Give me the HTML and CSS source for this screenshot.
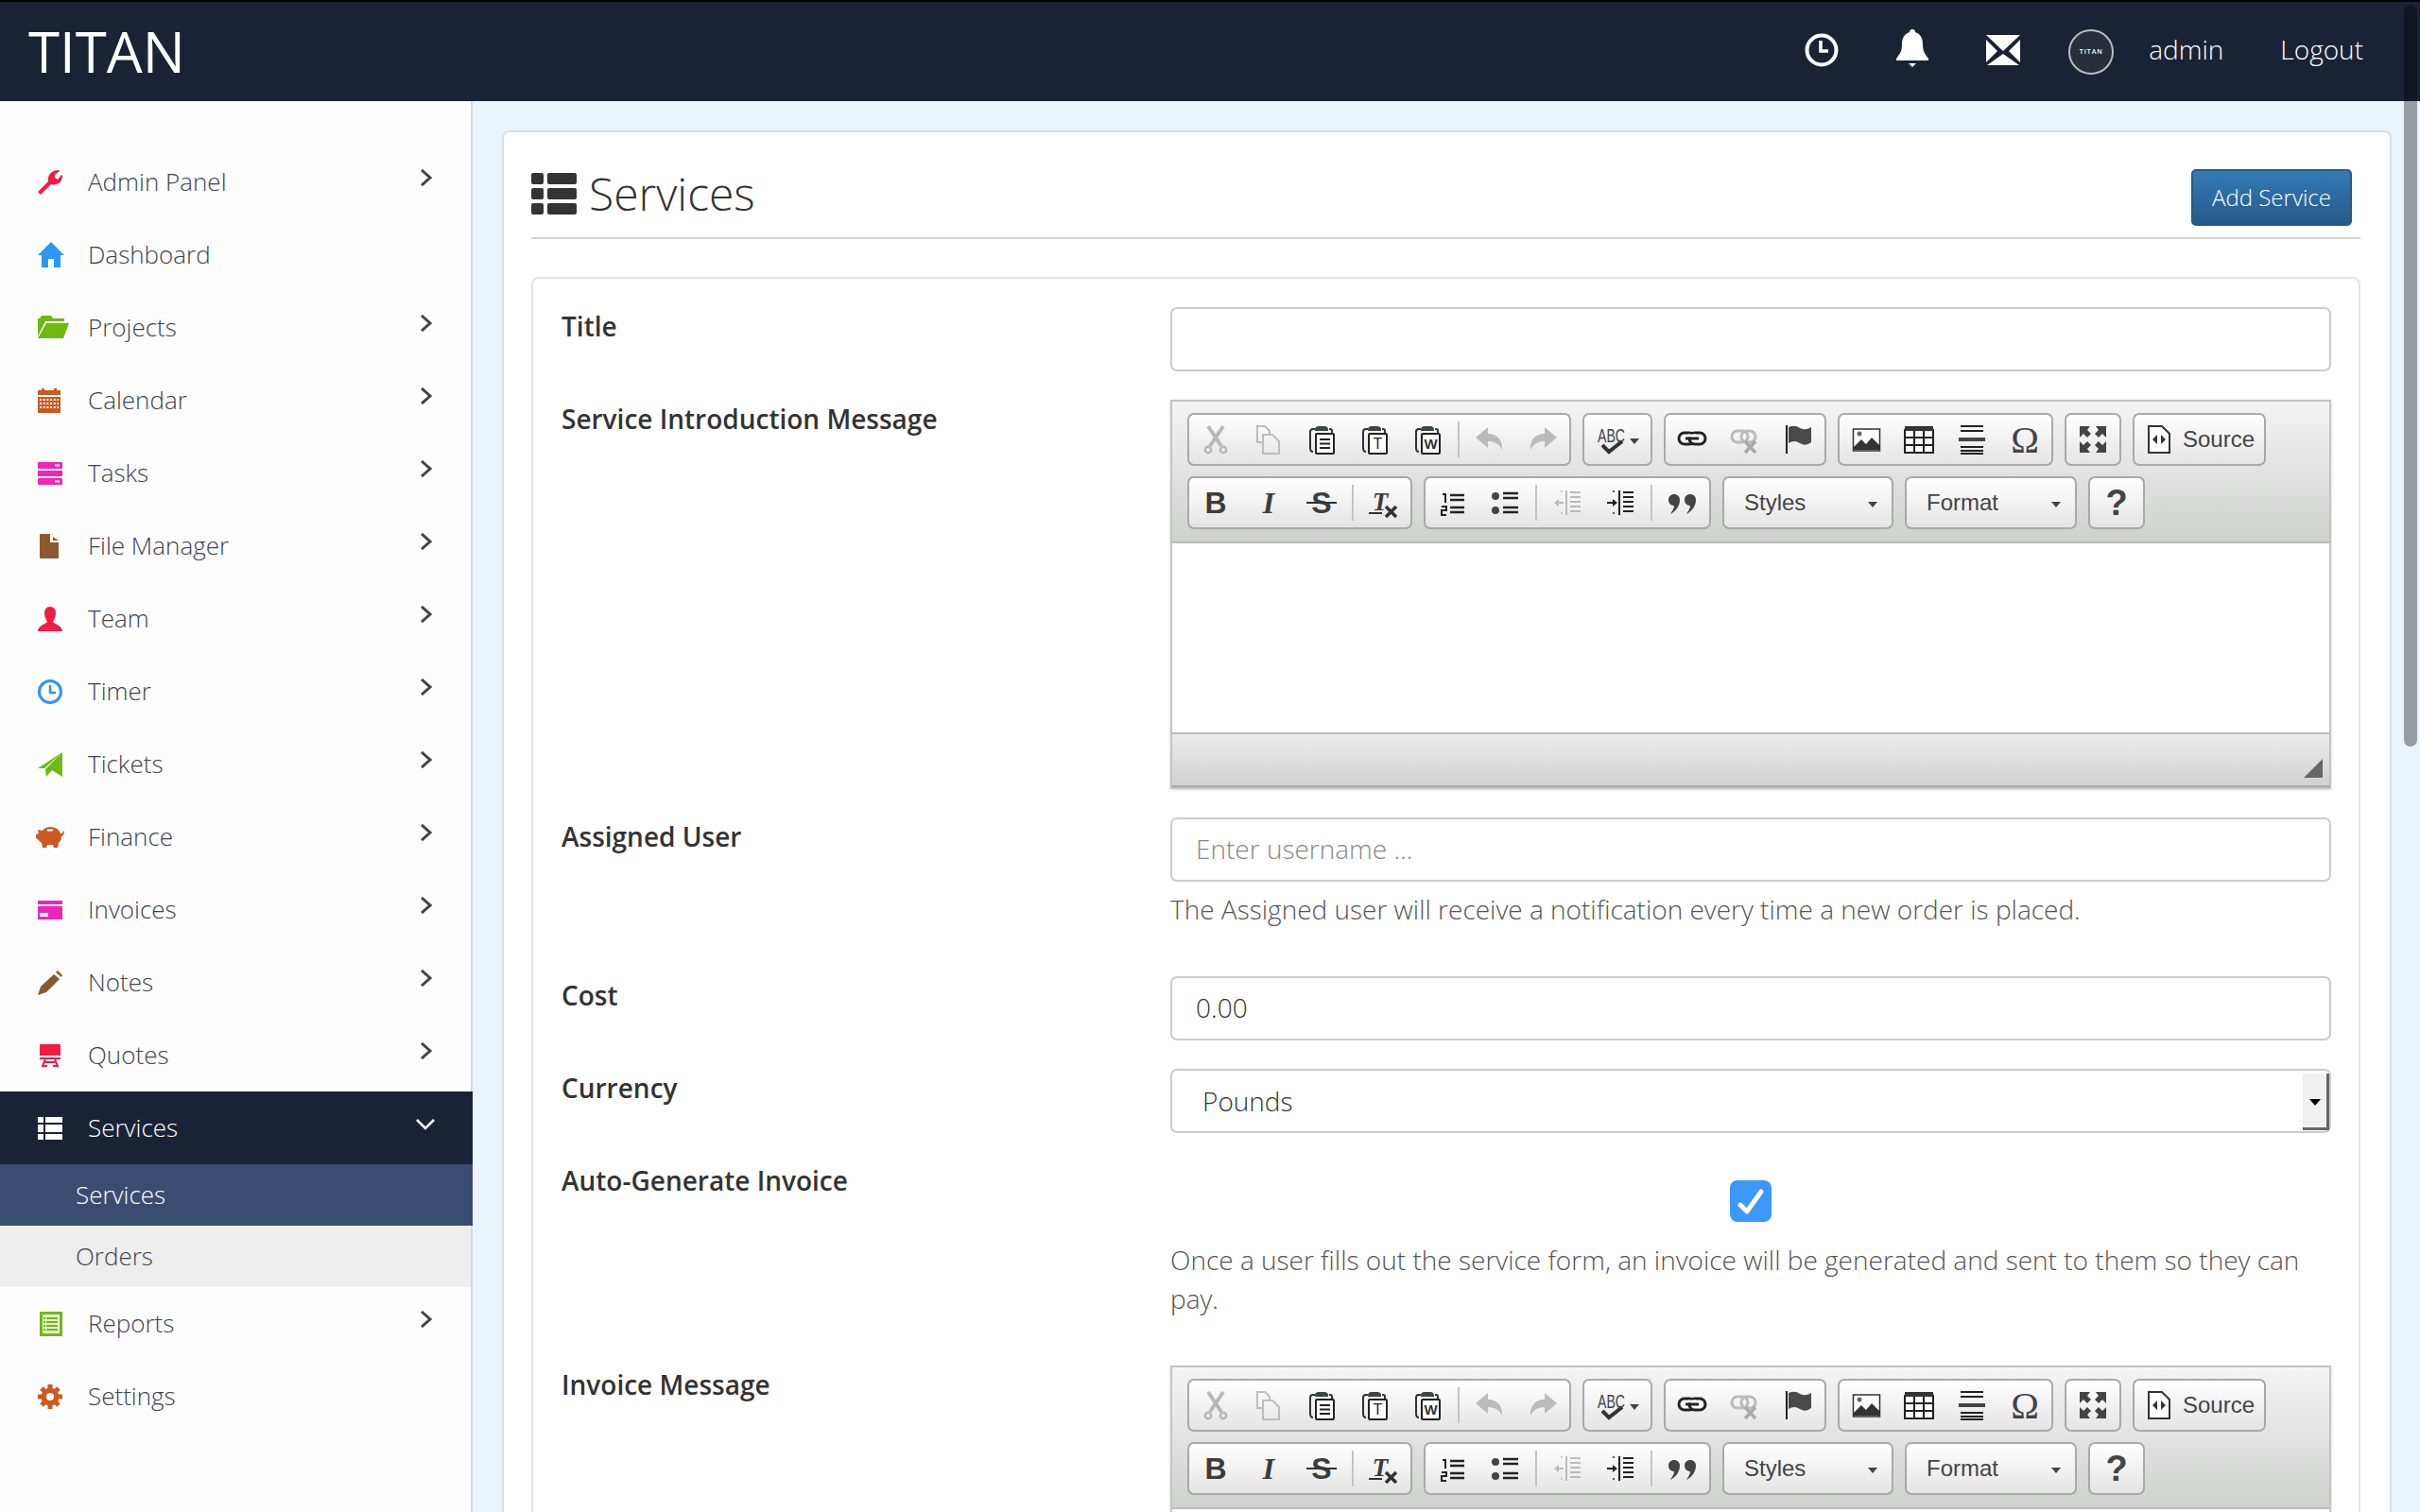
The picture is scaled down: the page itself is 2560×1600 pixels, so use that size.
FILE: index.html
```html
<!DOCTYPE html>
<html lang="en">
<head>
  <meta charset="UTF-8">
  <title>Services - Titan</title>
  <link rel="stylesheet" href="styles.css">
</head>
<body>

<!-- editor icons, used by both toolbars -->
<svg class="icon-sheet" width="0" height="0">
  <symbol id="ck-cut" viewBox="0 0 32 32">
    <g fill="none" stroke="#b8b8b8"><path stroke-width="4" d="M8 2 L22 23 M24 2 L10 23"/><circle cx="8" cy="27" r="3.2" stroke-width="2.4"/><circle cx="24" cy="27" r="3.2" stroke-width="2.4"/></g>
  </symbol>
  <symbol id="ck-copy" viewBox="0 0 32 32">
    <path fill="none" stroke="#bdbdbd" stroke-width="2" d="M9 19 H4 V2 H12 L17 7 V10 M10 11 H20 L27 18 V31 H10Z"/>
  </symbol>
  <symbol id="ck-clip" viewBox="0 0 32 32">
    <path fill="none" stroke="#2b3333" stroke-width="2" d="M9 5 H7 Q4 5 4 8 V25 Q4 29 7 29 M24 5 H25 Q27 5 27 7 V9"/>
    <path fill="#3c4444" d="M9 6 Q9 2 13 2 H19 Q23 2 23 6 V7 H9Z"/>
    <rect x="10" y="10" width="19" height="21" rx="1" fill="#fff" stroke="#222" stroke-width="2"/>
  </symbol>
  <symbol id="ck-undo" viewBox="0 0 32 32">
    <path fill="#bbb" d="M1 14 L14 3 V10 C24 10 30 17 29 27 C26 21 21 18 14 18 V25Z"/>
  </symbol>
  <symbol id="ck-redo" viewBox="0 0 32 32">
    <path fill="#bbb" d="M31 14 L18 3 V10 C8 10 2 17 3 27 C6 21 11 18 18 18 V25Z"/>
  </symbol>
  <symbol id="ck-link" viewBox="0 0 32 32">
    <g fill="#fff" stroke="#222" stroke-width="3"><rect x="2" y="9" width="17" height="12" rx="6"/><rect x="13" y="9" width="17" height="12" rx="6"/></g>
    <path stroke="#fff" stroke-width="3" d="M12 12 H20"/><path stroke="#222" stroke-width="3" d="M9 15 H23"/>
  </symbol>
  <symbol id="ck-unlink" viewBox="0 0 32 32">
    <g fill="none" stroke="#bbb" stroke-width="3"><rect x="2" y="7" width="17" height="12" rx="6"/><rect x="12" y="7" width="15" height="12" rx="6"/></g>
    <path stroke="#aaa" stroke-width="3.500" d="M16 18 L27 30 M27 18 L16 30"/>
  </symbol>
  <symbol id="ck-flag" viewBox="0 0 32 32">
    <path stroke="#222" stroke-width="2" d="M4 1 V31"/>
    <path fill="#4a4a4a" d="M6 3 Q13 0 18 4 Q24 7 30 3 V19 Q24 24 18 20 Q12 16 6 20Z"/>
  </symbol>
  <symbol id="ck-image" viewBox="0 0 32 32">
    <rect x="2.500" y="5" width="28" height="23" fill="#fff" stroke="#333" stroke-width="1.500"/>
    <circle cx="9" cy="10" r="2.500" fill="#666"/>
    <path fill="#333" d="M3 27 V24 L11 16 L16 21 L22 14 L30 22 V27Z"/>
  </symbol>
  <symbol id="ck-table" viewBox="0 0 32 32">
    <path fill="#fff" stroke="#222" stroke-width="2" d="M1 6 H31 V30 H1Z M11 6 V30 M21 6 V30 M1 14 H31 M1 22 H31"/>
    <rect x="1" y="2" width="30" height="5" fill="#333"/>
  </symbol>
  <symbol id="ck-rule" viewBox="0 0 32 32">
    <path stroke="#222" stroke-width="2" d="M4 2 H28 M4 7 H28 M4 24 H28 M4 28 H28 M4 31 H28"/>
    <path stroke="#444" stroke-width="4" d="M2 16 H30"/>
  </symbol>
  <symbol id="ck-fit" viewBox="0 0 32 32">
    <path fill="#444" d="M2 2 H13 L10 6 L14 10 L10 14 L6 10 L2 14Z M30 2 H19 L22 6 L18 10 L22 14 L26 10 L30 14Z M2 30 H13 L10 26 L14 22 L10 18 L6 22 L2 18Z M30 30 H19 L22 26 L18 22 L22 18 L26 22 L30 18Z"/>
  </symbol>
  <symbol id="ck-source" viewBox="0 0 32 32">
    <path fill="#fff" stroke="#333" stroke-width="2" d="M5 2 H19 L27 10 V30 H5Z"/>
    <path fill="#333" d="M14 11 V21 L9 16Z M18 11 V21 L23 16Z"/>
  </symbol>
  <symbol id="ck-ol" viewBox="0 0 32 32">
    <path stroke="#222" stroke-width="2.500" d="M14 8 H29 M14 13 H29 M14 21 H29 M14 26 H29"/>
    <path fill="none" stroke="#222" stroke-width="2" d="M6 7 H9 V16 M5 20 H10 V24 H5 V29 H10"/>
  </symbol>
  <symbol id="ck-ul" viewBox="0 0 32 32">
    <circle cx="6" cy="9" r="4" fill="#444"/><circle cx="6" cy="24" r="4" fill="#444"/>
    <path stroke="#222" stroke-width="2.500" d="M14 6 H30 M14 11 H30 M14 21 H30 M14 26 H30"/>
  </symbol>
  <symbol id="ck-outdent" viewBox="0 0 32 32">
    <path stroke="#bbb" stroke-width="2" d="M15 3 V29 M19 5 H30 M19 10 H30 M19 15 H30 M19 20 H30 M19 25 H30"/>
    <path fill="#bbb" d="M2 16 L7 12 V15 H12 V17 H7 V20Z"/>
    <path stroke="#ccc" stroke-width="2" stroke-dasharray="2 3" d="M9 4 H12 M9 27 H12"/>
  </symbol>
  <symbol id="ck-indent" viewBox="0 0 32 32">
    <path stroke="#222" stroke-width="2" d="M15 3 V29"/>
    <path stroke="#222" stroke-width="2" d="M19 5 H30 M19 10 H30 M19 15 H30 M19 20 H30 M19 25 H30"/>
    <path fill="#222" d="M13 16 L8 12 V15 H2 V17 H8 V20Z"/>
    <path stroke="#555" stroke-width="2" stroke-dasharray="2 3" d="M8 4 H12 M8 27 H12"/>
  </symbol>
  <symbol id="ck-quote" viewBox="0 0 32 32">
    <path fill="#444" d="M7 7 C10.500 7 13 9.500 13 13 C13 19 9 25 3 28 C5.500 24 7 21.500 7 19 C3.500 19 1 16.500 1 13 C1 9.500 3.500 7 7 7Z M24 7 C27.500 7 30 9.500 30 13 C30 19 26 25 20 28 C22.500 24 24 21.500 24 19 C20.500 19 18 16.500 18 13 C18 9.500 20.500 7 24 7Z"/>
  </symbol>
  <symbol id="chevron" viewBox="0 0 14 18">
    <path fill="none" stroke="#444" stroke-width="3" d="M2 1 L11 9 L2 17"/>
  </symbol>
</svg>

<header class="topbar">
  <a class="brand">TITAN</a>
  <nav class="topbar-nav">
    <svg class="top-icon" width="36" height="36" viewBox="0 0 36 36"><circle cx="18" cy="18" r="15.500" fill="none" stroke="#fff" stroke-width="4"/><path fill="none" stroke="#fff" stroke-width="3.500" d="M17 8 V19 H25"/></svg>
    <svg class="top-icon" width="36" height="48" viewBox="0 0 36 48"><path fill="#fff" d="M18 2 C20 2 21 3 21 5 C27 7 29 12 29 18 C29 26 32 29 35 33 V35 H1 V33 C4 29 7 26 7 18 C7 12 9 7 15 5 C15 3 16 2 18 2Z M14 38 H22 L18 42Z"/></svg>
    <svg class="top-icon" width="36" height="32" viewBox="0 0 36 32"><path fill="#fff" d="M0 0 H36 L18 17Z M0 5 L12 17 L0 29Z M36 5 L24 17 L36 29Z M1 32 L18 20 L35 32Z"/></svg>
    <span class="avatar">TITAN</span>
    <a class="top-link top-user">admin</a>
    <a class="top-link">Logout</a>
  </nav>
</header>

<div class="layout">
  <aside class="sidebar">
    <ul class="nav">
      <li class="nav-item">
        <svg width="26" height="26" viewBox="0 0 26 26"><path fill="#f01d45" d="M3 26 L0 23 L11 12 C10 6 14 0 22 0 L23 1 L18 5 L18 8 L21 10 L25 5 L26 6 C26 13 20 17 14 15Z"/></svg>
        <span>Admin Panel</span><svg class="chev"><use href="#chevron"/></svg>
      </li>
      <li class="nav-item">
        <svg width="28" height="27" viewBox="0 0 28 27"><path fill="#2e97f5" d="M14 0 L28 14 H24 V27 H17 V18 H11 V27 H4 V14 H0Z"/></svg>
        <span>Dashboard</span>
      </li>
      <li class="nav-item">
        <svg width="33" height="25" viewBox="0 0 33 25"><path fill="#6fba12" d="M0 3 H2 L4 0 H14 L16 3 H28 V6 H8 L0 22Z M9 8 H33 L27 24 H0Z"/></svg>
        <span>Projects</span><svg class="chev"><use href="#chevron"/></svg>
      </li>
      <li class="nav-item">
        <svg width="24" height="26" viewBox="0 0 24 26"><path fill="#cc5a20" d="M0 2 H4 V0 H7 V2 H17 V0 H20 V2 H24 V7 H0Z M0 9 H24 V26 H0Z"/><path stroke="#fff" stroke-width="2" stroke-dasharray="2 1.700" d="M2 12 H22 M2 16 H22 M2 20 H22"/></svg>
        <span>Calendar</span><svg class="chev"><use href="#chevron"/></svg>
      </li>
      <li class="nav-item">
        <svg width="26" height="24" viewBox="0 0 26 24"><path fill="#f024b8" d="M1 0 H25 Q26 0 26 1 V6 Q26 7 25 7 H1 Q0 7 0 6 V1 Q0 0 1 0Z M0 9 H26 V15 H0Z M1 17 H25 Q26 17 26 18 V23 Q26 24 25 24 H1 Q0 24 0 23 V18 Q0 17 1 17Z"/><path stroke="#fff" stroke-width="2" d="M18 3.500 H23 M18 20.500 H23"/></svg>
        <span>Tasks</span><svg class="chev"><use href="#chevron"/></svg>
      </li>
      <li class="nav-item">
        <svg class="nudge" width="20" height="26" viewBox="0 0 20 26"><path fill="#8a5a2e" d="M1 0 H11 V9 H20 V25 Q20 26 19 26 H1 Q0 26 0 25 V1 Q0 0 1 0Z M14 3 L20 7 H14Z"/></svg>
        <span>File Manager</span><svg class="chev"><use href="#chevron"/></svg>
      </li>
      <li class="nav-item">
        <svg width="26" height="26" viewBox="0 0 26 26"><path fill="#f01d45" d="M13 0 C17 0 19 3 19 7 C19 11 17 14 16 16 C17 18 26 20 26 26 H0 C0 20 9 18 10 16 C9 14 7 11 7 7 C7 3 9 0 13 0Z"/></svg>
        <span>Team</span><svg class="chev"><use href="#chevron"/></svg>
      </li>
      <li class="nav-item">
        <svg width="26" height="26" viewBox="0 0 26 26"><circle cx="13" cy="13" r="11.500" fill="none" stroke="#2e97f5" stroke-width="3"/><path fill="none" stroke="#2e97f5" stroke-width="2.500" d="M13 6 V14 H19"/></svg>
        <span>Timer</span><svg class="chev"><use href="#chevron"/></svg>
      </li>
      <li class="nav-item">
        <svg width="26" height="26" viewBox="0 0 26 26"><path fill="#6fba12" d="M26 0 V26 L15 19 L9 26 L8 18 Z M26 0 L0 17 L7 17Z"/></svg>
        <span>Tickets</span><svg class="chev"><use href="#chevron"/></svg>
      </li>
      <li class="nav-item">
        <svg class="nudge-back" width="30" height="22" viewBox="0 0 30 22"><path fill="#cc5a20" d="M15 0 C20 0 24 2 26 7 C28 7 29 5 29 4 L30 5 C30 8 28 10 27 10 C27 14 25 16 24 17 L23 22 H19 L18 19 H12 L11 22 H7 L6 17 C4 16 3 14 2 13 L0 12 V8 L3 7 L2 3 L7 4 C9 1 12 0 15 0Z"/><path stroke="#fff" stroke-width="2" d="M12 3.500 H18"/></svg>
        <span>Finance</span><svg class="chev"><use href="#chevron"/></svg>
      </li>
      <li class="nav-item">
        <svg width="26" height="20" viewBox="0 0 26 20"><path fill="#f024b8" d="M0 0 H26 V4 H0Z M0 6 H26 V20 H0Z"/><path stroke="#fff" stroke-width="4" d="M2 15 H11"/></svg>
        <span>Invoices</span><svg class="chev"><use href="#chevron"/></svg>
      </li>
      <li class="nav-item">
        <svg width="26" height="26" viewBox="0 0 26 26"><path fill="#8a5a2e" d="M0 26 L3 17 L17 4 L23 9 L9 23Z M19 2 L21 0 L26 5 L25 7Z"/></svg>
        <span>Notes</span><svg class="chev"><use href="#chevron"/></svg>
      </li>
      <li class="nav-item">
        <svg class="nudge" width="22" height="24" viewBox="0 0 22 24"><path fill="#f01d45" d="M1 0 H21 Q22 0 22 1 V12 H0 V1 Q0 0 1 0Z M0 14 H22 V16 H0Z"/><path fill="none" stroke="#f01d45" stroke-width="2" d="M6 16 L3 23 M16 16 L19 23 M2 23 H8 M14 23 H20 M5 19 H17"/></svg>
        <span>Quotes</span><svg class="chev"><use href="#chevron"/></svg>
      </li>
      <li class="nav-item active">
        <svg width="26" height="24" viewBox="0 0 26 24"><path fill="#fff" d="M0 0 H6 V6 H0Z M8 0 H26 V6 H8Z M0 8 H6 V16 H0Z M8 8 H26 V16 H8Z M0 18 H6 V24 H0Z M8 18 H26 V24 H8Z"/></svg>
        <span>Services</span><svg class="chev-down" width="20" height="14" viewBox="0 0 20 14"><path fill="none" stroke="#fff" stroke-width="2.500" d="M1 2 L10 11 L19 2"/></svg>
      </li>
      <li class="nav-sub current">Services</li>
      <li class="nav-sub">Orders</li>
      <li class="nav-item">
        <svg class="nudge" width="24" height="26" viewBox="0 0 24 26"><rect width="24" height="26" fill="#6fba12"/><rect x="3" y="3" width="18" height="20" fill="#e9f5d8"/><path stroke="#6fba12" stroke-width="2" d="M7 7 H19 M7 11 H19 M7 15 H19 M7 19 H19"/><path stroke="#6fba12" stroke-width="2" d="M4 7 H6 M4 11 H6 M4 15 H6 M4 19 H6"/></svg>
        <span>Reports</span><svg class="chev"><use href="#chevron"/></svg>
      </li>
      <li class="nav-item">
        <svg width="26" height="26" viewBox="0 0 26 26"><circle cx="13" cy="13" r="6.500" fill="none" stroke="#cc5a20" stroke-width="6"/><path stroke="#cc5a20" stroke-width="5" d="M13 0 V26 M0 13 H26 M4 4 L22 22 M22 4 L4 22"/><circle cx="13" cy="13" r="4" fill="#fff"/></svg>
        <span>Settings</span>
      </li>
    </ul>
  </aside>

  <main class="main">
    <section class="card">
      <div class="page-head">
        <h1 class="page-title">
          <svg width="48" height="44" viewBox="0 0 48 44"><path fill="#333" d="M2 0 H11 Q13 0 13 2 V10 Q13 12 11 12 H2 Q0 12 0 10 V2 Q0 0 2 0Z M19 0 H46 Q48 0 48 2 V10 Q48 12 46 12 H19 Q17 12 17 10 V2 Q17 0 19 0Z M2 16 H11 Q13 16 13 18 V26 Q13 28 11 28 H2 Q0 28 0 26 V18 Q0 16 2 16Z M19 16 H46 Q48 16 48 18 V26 Q48 28 46 28 H19 Q17 28 17 26 V18 Q17 16 19 16Z M2 32 H11 Q13 32 13 34 V42 Q13 44 11 44 H2 Q0 44 0 42 V34 Q0 32 2 32Z M19 32 H46 Q48 32 48 34 V42 Q48 44 46 44 H19 Q17 44 17 42 V34 Q17 32 19 32Z"/></svg>
          Services
        </h1>
        <a class="btn-primary">Add Service</a>
      </div>

      <form class="panel">
        <div class="form-row">
          <label>Title</label>
          <div><input class="field" type="text"></div>
        </div>

        <div class="form-row">
          <label>Service Introduction Message</label>
          <div class="editor">
            <div class="ck-toolbar">
              <div class="ck-line">
                <span class="ck-group"><span class="ck-btn"><svg class="ck-icon"><use href="#ck-cut"/></svg></span><span class="ck-btn"><svg class="ck-icon"><use href="#ck-copy"/></svg></span><span class="ck-btn"><svg class="ck-icon" viewBox="0 0 32 32"><use href="#ck-clip"/><path stroke="#222" stroke-width="2" d="M14 16 H25 M14 20.500 H25 M14 25 H25"/></svg></span><span class="ck-btn"><svg class="ck-icon" viewBox="0 0 32 32"><use href="#ck-clip"/><text x="19.500" y="26" class="ck-svg-text" font-size="16" text-anchor="middle" fill="#222">T</text></svg></span><span class="ck-btn"><svg class="ck-icon" viewBox="0 0 32 32"><use href="#ck-clip"/><text x="19.500" y="26" class="ck-svg-text" font-size="15" font-weight="700" text-anchor="middle" fill="#333">W</text></svg></span><i class="ck-sep"></i><span class="ck-btn"><svg class="ck-icon"><use href="#ck-undo"/></svg></span><span class="ck-btn"><svg class="ck-icon"><use href="#ck-redo"/></svg></span></span>
                <span class="ck-group"><span class="ck-btn ck-spell"><svg width="70" height="51" viewBox="0 0 70 51"><text x="14" y="28" class="ck-svg-text" font-size="20" textLength="29" lengthAdjust="spacingAndGlyphs" fill="#444">ABC</text><path fill="none" stroke="#333" stroke-width="4" d="M19 31 L26 38 L40 27"/><path fill="#444" d="M48 24 H58 L53 30Z"/></svg></span></span>
                <span class="ck-group"><span class="ck-btn"><svg class="ck-icon"><use href="#ck-link"/></svg></span><span class="ck-btn"><svg class="ck-icon"><use href="#ck-unlink"/></svg></span><span class="ck-btn"><svg class="ck-icon"><use href="#ck-flag"/></svg></span></span>
                <span class="ck-group"><span class="ck-btn"><svg class="ck-icon"><use href="#ck-image"/></svg></span><span class="ck-btn"><svg class="ck-icon"><use href="#ck-table"/></svg></span><span class="ck-btn"><svg class="ck-icon"><use href="#ck-rule"/></svg></span><span class="ck-btn ck-omega">Ω</span></span>
                <span class="ck-group"><span class="ck-btn"><svg class="ck-icon"><use href="#ck-fit"/></svg></span></span>
                <span class="ck-group"><span class="ck-btn ck-source"><svg class="ck-icon"><use href="#ck-source"/></svg>Source</span></span>
              </div>
              <div class="ck-line">
                <span class="ck-group"><span class="ck-btn ck-bold">B</span><span class="ck-btn ck-italic">I</span><span class="ck-btn ck-strike">S</span><i class="ck-sep"></i><span class="ck-btn ck-clear"><svg class="ck-icon" viewBox="0 0 32 32"><text x="12" y="24" class="ck-svg-serif" font-size="27" font-weight="700" font-style="italic" text-anchor="middle" fill="#3c3c3c">T</text><path stroke="#333" stroke-width="2" d="M0 27 H14"/><path stroke="#333" stroke-width="3.500" d="M18 20 L29 31 M29 20 L18 31"/></svg></span></span>
                <span class="ck-group"><span class="ck-btn"><svg class="ck-icon"><use href="#ck-ol"/></svg></span><span class="ck-btn"><svg class="ck-icon"><use href="#ck-ul"/></svg></span><i class="ck-sep"></i><span class="ck-btn"><svg class="ck-icon"><use href="#ck-outdent"/></svg></span><span class="ck-btn"><svg class="ck-icon"><use href="#ck-indent"/></svg></span><i class="ck-sep"></i><span class="ck-btn"><svg class="ck-icon"><use href="#ck-quote"/></svg></span></span>
                <span class="ck-group ck-combo ck-combo-styles">Styles<i class="ck-caret"></i></span>
                <span class="ck-group ck-combo ck-combo-format">Format<i class="ck-caret"></i></span>
                <span class="ck-group"><span class="ck-btn ck-help">?</span></span>
              </div>
            </div>
            <div class="ck-body"></div>
            <div class="ck-foot"><i class="ck-resize"></i></div>
          </div>
        </div>

        <div class="form-row">
          <label>Assigned User</label>
          <div>
            <input class="field" type="text" placeholder="Enter username ...">
            <p class="help">The Assigned user will receive a notification every time a new order is placed.</p>
          </div>
        </div>

        <div class="form-row">
          <label>Cost</label>
          <div><input class="field" type="text" value="0.00"></div>
        </div>

        <div class="form-row">
          <label>Currency</label>
          <div class="select-box">
            <select class="field field-select"><option>Pounds</option></select>
            <i class="select-arrow"></i>
          </div>
        </div>

        <div class="form-row">
          <label>Auto-Generate Invoice</label>
          <div>
            <div class="check-line">
              <svg width="44" height="44" viewBox="0 0 44 44"><rect width="44" height="44" rx="8" fill="#3b99fc"/><path fill="none" stroke="#fff" stroke-width="5" stroke-linecap="round" stroke-linejoin="round" d="M11 26 L18 33 L33 12"/></svg>
            </div>
            <p class="help">Once a user fills out the service form, an invoice will be generated and sent to them so they can pay.</p>
          </div>
        </div>

        <div class="form-row">
          <label>Invoice Message</label>
          <div class="editor">
            <div class="ck-toolbar">
              <div class="ck-line">
                <span class="ck-group"><span class="ck-btn"><svg class="ck-icon"><use href="#ck-cut"/></svg></span><span class="ck-btn"><svg class="ck-icon"><use href="#ck-copy"/></svg></span><span class="ck-btn"><svg class="ck-icon" viewBox="0 0 32 32"><use href="#ck-clip"/><path stroke="#222" stroke-width="2" d="M14 16 H25 M14 20.500 H25 M14 25 H25"/></svg></span><span class="ck-btn"><svg class="ck-icon" viewBox="0 0 32 32"><use href="#ck-clip"/><text x="19.500" y="26" class="ck-svg-text" font-size="16" text-anchor="middle" fill="#222">T</text></svg></span><span class="ck-btn"><svg class="ck-icon" viewBox="0 0 32 32"><use href="#ck-clip"/><text x="19.500" y="26" class="ck-svg-text" font-size="15" font-weight="700" text-anchor="middle" fill="#333">W</text></svg></span><i class="ck-sep"></i><span class="ck-btn"><svg class="ck-icon"><use href="#ck-undo"/></svg></span><span class="ck-btn"><svg class="ck-icon"><use href="#ck-redo"/></svg></span></span>
                <span class="ck-group"><span class="ck-btn ck-spell"><svg width="70" height="51" viewBox="0 0 70 51"><text x="14" y="28" class="ck-svg-text" font-size="20" textLength="29" lengthAdjust="spacingAndGlyphs" fill="#444">ABC</text><path fill="none" stroke="#333" stroke-width="4" d="M19 31 L26 38 L40 27"/><path fill="#444" d="M48 24 H58 L53 30Z"/></svg></span></span>
                <span class="ck-group"><span class="ck-btn"><svg class="ck-icon"><use href="#ck-link"/></svg></span><span class="ck-btn"><svg class="ck-icon"><use href="#ck-unlink"/></svg></span><span class="ck-btn"><svg class="ck-icon"><use href="#ck-flag"/></svg></span></span>
                <span class="ck-group"><span class="ck-btn"><svg class="ck-icon"><use href="#ck-image"/></svg></span><span class="ck-btn"><svg class="ck-icon"><use href="#ck-table"/></svg></span><span class="ck-btn"><svg class="ck-icon"><use href="#ck-rule"/></svg></span><span class="ck-btn ck-omega">Ω</span></span>
                <span class="ck-group"><span class="ck-btn"><svg class="ck-icon"><use href="#ck-fit"/></svg></span></span>
                <span class="ck-group"><span class="ck-btn ck-source"><svg class="ck-icon"><use href="#ck-source"/></svg>Source</span></span>
              </div>
              <div class="ck-line">
                <span class="ck-group"><span class="ck-btn ck-bold">B</span><span class="ck-btn ck-italic">I</span><span class="ck-btn ck-strike">S</span><i class="ck-sep"></i><span class="ck-btn ck-clear"><svg class="ck-icon" viewBox="0 0 32 32"><text x="12" y="24" class="ck-svg-serif" font-size="27" font-weight="700" font-style="italic" text-anchor="middle" fill="#3c3c3c">T</text><path stroke="#333" stroke-width="2" d="M0 27 H14"/><path stroke="#333" stroke-width="3.500" d="M18 20 L29 31 M29 20 L18 31"/></svg></span></span>
                <span class="ck-group"><span class="ck-btn"><svg class="ck-icon"><use href="#ck-ol"/></svg></span><span class="ck-btn"><svg class="ck-icon"><use href="#ck-ul"/></svg></span><i class="ck-sep"></i><span class="ck-btn"><svg class="ck-icon"><use href="#ck-outdent"/></svg></span><span class="ck-btn"><svg class="ck-icon"><use href="#ck-indent"/></svg></span><i class="ck-sep"></i><span class="ck-btn"><svg class="ck-icon"><use href="#ck-quote"/></svg></span></span>
                <span class="ck-group ck-combo ck-combo-styles">Styles<i class="ck-caret"></i></span>
                <span class="ck-group ck-combo ck-combo-format">Format<i class="ck-caret"></i></span>
                <span class="ck-group"><span class="ck-btn ck-help">?</span></span>
              </div>
            </div>
            <div class="ck-body"></div>
          </div>
        </div>
      </form>
    </section>
  </main>
</div>

<div class="scroll-thumb"></div>

</body>
</html>
```

FILE: styles.css
```css
* {
  box-sizing: border-box;
}

html, body {
  margin: 0;
  height: 100%;
  overflow: hidden;
}

body {
  position: relative;
  font-family: "Open Sans", sans-serif;
  font-size: 26px;
  font-weight: 300;
  color: #333;
  background: #ebf3fb;
}

.icon-sheet {
  position: absolute;
}

.ck-svg-text {
  font-family: "Liberation Sans", sans-serif;
}

.ck-svg-serif {
  font-family: "Liberation Serif", serif;
}

/* top bar */
.topbar {
  display: flex;
  align-items: center;
  justify-content: space-between;
  height: 107px;
  padding: 0 60px 0 30px;
  background: #1a2335;
  border-top: 2px solid #000;
  color: #fff;
}

.brand {
  font-size: 60px;
  font-weight: 400;
  line-height: 1;
  margin-top: -2px;
}

.topbar-nav {
  display: flex;
  align-items: center;
}

.top-icon {
  margin-right: 60px;
  margin-top: -4px;
}

.avatar {
  display: flex;
  align-items: center;
  justify-content: center;
  width: 48px;
  height: 48px;
  margin-left: -9px;
  border: 2px solid #bbb;
  border-radius: 50%;
  background: #262f3a;
  font-size: 7px;
  font-weight: 600;
  letter-spacing: 1px;
}

.top-link {
  font-size: 28px;
  margin-left: 60px;
  margin-top: -6px;
}

.top-user {
  margin-left: 37px;
}

/* sidebar */
.layout {
  display: flex;
  height: calc(100% - 107px);
}

.sidebar {
  flex: none;
  width: 500px;
  background: #fdfdfd;
  border-right: 2px solid #d3dae2;
  padding-top: 47px;
}

.nav {
  list-style: none;
  margin: 0;
  padding: 0;
  color: #3d444f;
}

.nav-item {
  display: grid;
  grid-template-columns: 53px 1fr auto;
  align-items: center;
  height: 77px;
  padding-left: 40px;
}

.nav-item span {
  padding-bottom: 2px;
}

.nudge {
  margin-left: 2px;
}

.nudge-back {
  margin-left: -2px;
}

.chev {
  width: 14px;
  height: 18px;
  margin-right: 40px;
  margin-bottom: 9px;
}

.chev-down {
  margin-right: 40px;
  margin-bottom: 7px;
}

.nav-item.active {
  background: #1a2335;
  color: #fff;
  margin-right: -2px;
}

.nav-sub {
  display: flex;
  align-items: center;
  height: 65px;
  padding-left: 80px;
  padding-bottom: 1px;
  background: #eee;
}

.nav-sub.current {
  background: #3a4d70;
  color: #fff;
  margin-right: -2px;
}

/* main card */
.main {
  flex: 1;
  padding: 31px 30px 0 31px;
  min-width: 0;
}

.card {
  background: #fff;
  border: 2px solid #d6e0ea;
  border-radius: 8px;
  padding: 0 31px 0 29px;
}

.page-head {
  display: flex;
  align-items: center;
  justify-content: space-between;
  height: 113px;
  padding-top: 16px;
  padding-right: 9px;
  margin-bottom: 40px;
  border-bottom: 2px solid #d2d2d2;
}

.page-title {
  display: flex;
  align-items: center;
  gap: 13px;
  margin: 0;
  padding-top: 3px;
  font-size: 48px;
  font-weight: 300;
  line-height: 1;
  color: #333;
}

.btn-primary {
  display: flex;
  align-items: center;
  justify-content: center;
  width: 170px;
  height: 60px;
  margin-top: 10px;
  border: 2px solid #265a88;
  border-radius: 5px;
  background: linear-gradient(#337ab7, #265a88);
  color: #fff;
  font-size: 24px;
}

/* form */
.panel {
  border: 2px solid #e3e3e3;
  border-radius: 8px;
  padding: 30px 29px 0 30px;
}

.form-row {
  display: grid;
  grid-template-columns: 644px 1fr;
  margin-bottom: 30px;
}

.form-row label {
  font-size: 28px;
  font-weight: 600;
  line-height: 40px;
  color: #333;
}

.field {
  display: block;
  width: 100%;
  height: 68px;
  padding: 0 25px 2px;
  border: 2px solid #ccc;
  border-radius: 7px;
  background: #fff;
  font-family: inherit;
  font-size: 28px;
  font-weight: 300;
  color: #333;
}

.field::placeholder {
  color: #888;
}

.field-select {
  appearance: none;
  padding: 0 25px 0 32px;
}

.select-box {
  position: relative;
}

.select-arrow {
  position: absolute;
  top: 5px;
  right: 2px;
  bottom: 3px;
  width: 28px;
  background: linear-gradient(#666, #666) no-repeat right/3px 100%, linear-gradient(#666, #666) no-repeat bottom/100% 3px, #f0f0f0;
}

.select-arrow::after {
  content: "";
  position: absolute;
  top: 27px;
  left: 7px;
  border: 6px solid transparent;
  border-top: 7px solid #000;
  border-bottom: 0;
}

.help {
  margin: 9px 0 20px;
  font-size: 28px;
  font-weight: 300;
  line-height: 41px;
  color: #555;
}

.check-line {
  display: flex;
  justify-content: center;
  padding-top: 20px;
  margin-bottom: 20px;
}

.check-line + .help {
  margin-top: 0;
}

/* editor */
.editor {
  border: 2px solid #c4c4c4;
  box-shadow: 0 1px 3px rgba(0, 0, 0, .15);
}

.ck-toolbar {
  height: 150px;
  padding: 12px 16px 0;
  background: linear-gradient(#f4f4f4, #cfd1cf);
  border-bottom: 2px solid #bcbcbc;
}

.ck-line {
  display: flex;
  gap: 12px;
  margin-bottom: 11px;
}

.ck-group {
  display: flex;
  align-items: center;
  height: 56px;
  border: 2px solid #a9a9a9;
  border-radius: 7px;
  background: linear-gradient(#fff, #e4e4e4);
  font-family: "Liberation Sans", sans-serif;
  font-size: 24px;
  font-weight: 400;
  color: #444;
}

.ck-btn {
  display: flex;
  align-items: center;
  justify-content: center;
  width: 56px;
  height: 100%;
}

.ck-icon {
  width: 32px;
  height: 32px;
}

.ck-clear .ck-icon {
  overflow: visible;
}

.ck-sep {
  width: 2px;
  height: 38px;
  margin: 0 4px;
  background: #c4c4c4;
}

.ck-bold,
.ck-strike {
  font-size: 32px;
  font-weight: 700;
  color: #3c3c3c;
}

.ck-strike {
  position: relative;
}

.ck-strike::after {
  content: "";
  position: absolute;
  left: 12px;
  right: 12px;
  top: 25px;
  height: 2px;
  background: #333;
}

.ck-italic {
  font-family: "Liberation Serif", serif;
  font-size: 32px;
  font-weight: 700;
  font-style: italic;
  color: #3c3c3c;
}

.ck-spell {
  width: 70px;
}

.ck-omega {
  font-family: "Liberation Serif", serif;
  font-size: 40px;
}

.ck-source {
  width: 137px;
  justify-content: flex-start;
  padding-left: 10px;
  gap: 9px;
}

.ck-combo {
  position: relative;
  padding-left: 21px;
}

.ck-combo-styles {
  width: 181px;
}

.ck-combo-format {
  width: 182px;
}

.ck-caret {
  position: absolute;
  right: 15px;
  top: 25px;
  border: 5px solid transparent;
  border-top: 6px solid #444;
  border-bottom: 0;
}

.ck-help {
  font-size: 38px;
  font-weight: 700;
}

.ck-body {
  height: 200px;
  background: #fff;
}

.ck-foot {
  position: relative;
  height: 58px;
  border-top: 2px solid #bcbcbc;
  background: linear-gradient(#ebebeb, #cfd1cf);
  box-shadow: inset 0 -2px 0 #aaa;
}

.ck-resize {
  position: absolute;
  right: 7px;
  bottom: 10px;
  border-left: 20px solid transparent;
  border-bottom: 20px solid #666;
}

/* overlay scrollbar */
.scroll-thumb {
  position: absolute;
  top: 5px;
  right: 3px;
  width: 14px;
  height: 785px;
  border-radius: 7px;
  background: rgba(0, 0, 0, .35);
}
```
